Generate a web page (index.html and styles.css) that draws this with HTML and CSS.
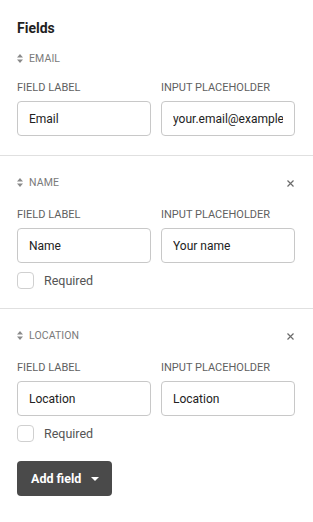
FILE: index.html
```html
<!DOCTYPE html>
<html lang="en">
<head>
<meta charset="utf-8">
<title>Fields</title>
<link rel="stylesheet" href="styles.css">
</head>
<body>
<div class="panel">
  <h2 class="title">Fields</h2>

  <section class="field first">
    <div class="field-head">
      <span class="drag">
        <svg width="6" height="9" viewBox="0 0 6 9"><path d="M3 0 L6 3.6 H0 Z M0 5.4 H6 L3 9 Z" fill="#8a8a8a"/></svg>
      </span>
      <span class="field-name">EMAIL</span>
    </div>
    <div class="grid">
      <label class="col">
        <span class="lbl">FIELD LABEL</span>
        <input class="inp" type="text" value="Email">
      </label>
      <label class="col">
        <span class="lbl">INPUT PLACEHOLDER</span>
        <input class="inp" type="text" value="your.email@example.com">
      </label>
    </div>
  </section>

  <section class="field">
    <div class="field-head tall">
      <span class="drag">
        <svg width="6" height="9" viewBox="0 0 6 9"><path d="M3 0 L6 3.6 H0 Z M0 5.4 H6 L3 9 Z" fill="#8a8a8a"/></svg>
      </span>
      <span class="field-name">NAME</span>
      <button class="close" aria-label="Remove">
        <svg width="7" height="7" viewBox="0 0 7 7"><path d="M0.5 0.5 L6.5 6.5 M6.5 0.5 L0.5 6.5" stroke="#6b6b6b" stroke-width="1.2"/></svg>
      </button>
    </div>
    <div class="grid">
      <label class="col">
        <span class="lbl">FIELD LABEL</span>
        <input class="inp" type="text" value="Name">
      </label>
      <label class="col">
        <span class="lbl">INPUT PLACEHOLDER</span>
        <input class="inp" type="text" value="Your name">
      </label>
    </div>
    <label class="req">
      <span class="box"></span>
      <span class="req-text">Required</span>
    </label>
  </section>

  <section class="field">
    <div class="field-head tall">
      <span class="drag">
        <svg width="6" height="9" viewBox="0 0 6 9"><path d="M3 0 L6 3.6 H0 Z M0 5.4 H6 L3 9 Z" fill="#8a8a8a"/></svg>
      </span>
      <span class="field-name">LOCATION</span>
      <button class="close" aria-label="Remove">
        <svg width="7" height="7" viewBox="0 0 7 7"><path d="M0.5 0.5 L6.5 6.5 M6.5 0.5 L0.5 6.5" stroke="#6b6b6b" stroke-width="1.2"/></svg>
      </button>
    </div>
    <div class="grid">
      <label class="col">
        <span class="lbl">FIELD LABEL</span>
        <input class="inp" type="text" value="Location">
      </label>
      <label class="col">
        <span class="lbl">INPUT PLACEHOLDER</span>
        <input class="inp" type="text" value="Location">
      </label>
    </div>
    <label class="req">
      <span class="box"></span>
      <span class="req-text">Required</span>
    </label>
  </section>

  <div class="actions">
    <button class="add">
      <span>Add field</span>
      <svg width="8" height="4" viewBox="0 0 8 4"><path d="M0 0 H8 L4 4 Z" fill="#ffffff"/></svg>
    </button>
  </div>
</div>
</body>
</html>
```

FILE: styles.css
```css
* { box-sizing: border-box; }

html, body {
  margin: 0;
  padding: 0;
  background: #ffffff;
}

body {
  font-family: Roboto, "Liberation Sans", Arial, sans-serif;
  color: #222222;
}

.panel {
  width: 313px;
  padding-top: 18px;
}

.title {
  margin: 0 17px;
  font-size: 14px;
  font-weight: 700;
  line-height: 20px;
  color: #1f1f1f;
}

.field {
  padding: 15px 18px 19px 17px;
  border-top: 1px solid #e0e0e0;
}

.field.first {
  border-top: none;
  padding-top: 12px;
}

.field-head {
  display: flex;
  align-items: center;
  height: 16px;
}

.field-head.tall {
  height: 22px;
}

.drag {
  display: flex;
  width: 6px;
  height: 9px;
  margin-right: 6px;
}

.field-name {
  font-size: 10.5px;
  color: #7a7a7a;
  letter-spacing: 0.1px;
}

.close {
  margin-left: auto;
  padding: 0;
  border: none;
  background: none;
  width: 10px;
  height: 22px;
  display: flex;
  align-items: center;
  justify-content: center;
  padding-top: 2px;
}

.grid {
  display: grid;
  grid-template-columns: 1fr 1fr;
  column-gap: 10px;
  margin-top: 15px;
}

.col {
  display: flex;
  flex-direction: column;
}

.lbl {
  font-size: 11px;
  line-height: 14px;
  color: #5f5f5f;
  margin-bottom: 6px;
}

.inp {
  width: 100%;
  height: 35px;
  border: 1px solid #c8c8c8;
  border-radius: 4px;
  padding: 0 11px;
  font-family: Roboto, "Liberation Sans", Arial, sans-serif;
  font-size: 12px;
  color: #222222;
  background: #ffffff;
  outline: none;
}

.req {
  display: flex;
  align-items: center;
  margin-top: 9px;
  height: 17px;
}

.box {
  width: 17px;
  height: 17px;
  border: 1px solid #d0d0d0;
  border-radius: 4px;
  background: #ffffff;
}

.req-text {
  margin-left: 10px;
  font-size: 12.5px;
  color: #555555;
}

.actions {
  padding: 0 17px;
}

.add {
  display: inline-flex;
  align-items: center;
  gap: 10px;
  height: 35px;
  padding: 0 13px 0 14px;
  background: #4a4a4a;
  border: none;
  border-radius: 4px;
  color: #ffffff;
  font-family: Roboto, "Liberation Sans", Arial, sans-serif;
  font-size: 12.5px;
  font-weight: 700;
}
```
